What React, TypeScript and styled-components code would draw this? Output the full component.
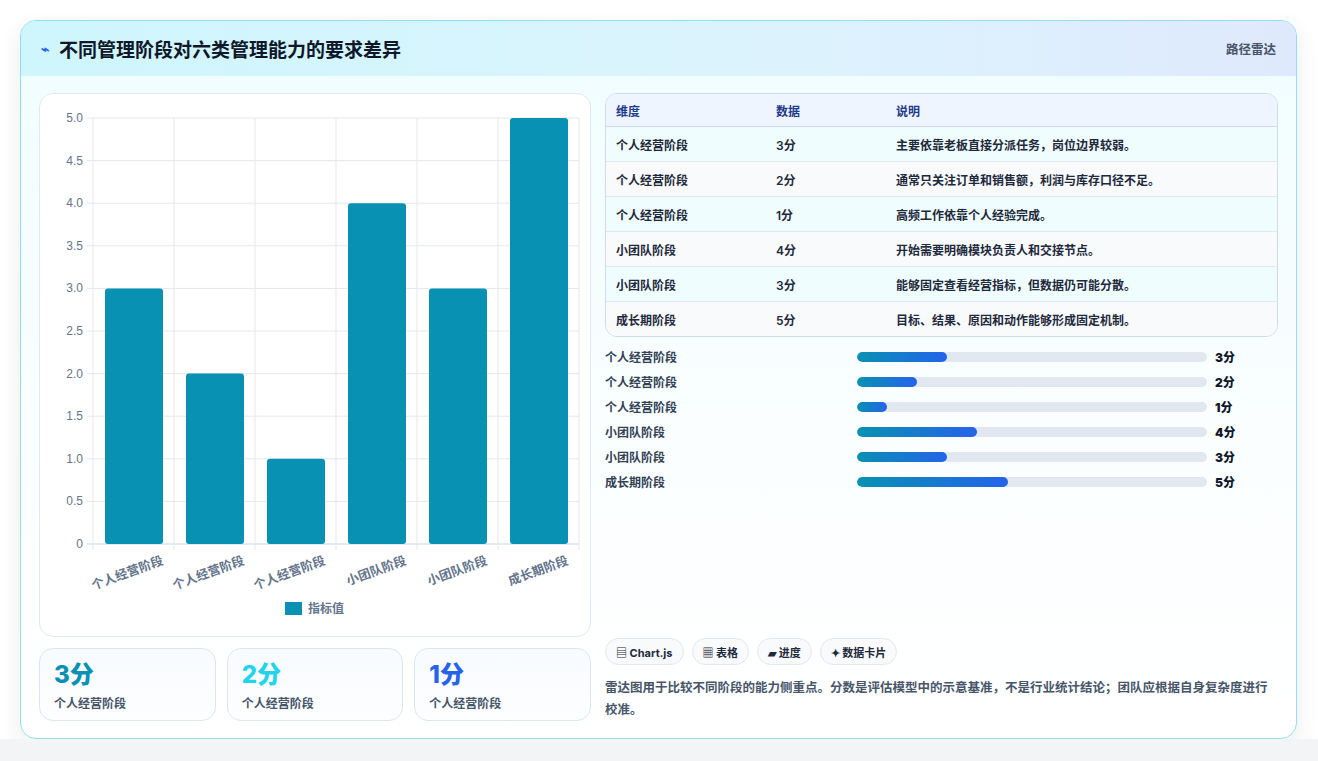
import React from 'react';
import styled, { createGlobalStyle } from 'styled-components';

const Global = createGlobalStyle`
  html, body { margin: 0; background: #fff; }
  body { font-family: "Inter", "Noto Sans CJK SC", sans-serif; color: #0f172a; }
`

const rows = [
  { name: '个人经营阶段', v: 3, note: '主要依靠老板直接分派任务，岗位边界较弱。' },
  { name: '个人经营阶段', v: 2, note: '通常只关注订单和销售额，利润与库存口径不足。' },
  { name: '个人经营阶段', v: 1, note: '高频工作依靠个人经验完成。' },
  { name: '小团队阶段', v: 4, note: '开始需要明确模块负责人和交接节点。' },
  { name: '小团队阶段', v: 3, note: '能够固定查看经营指标，但数据仍可能分散。' },
  { name: '成长期阶段', v: 5, note: '目标、结果、原因和动作能够形成固定机制。' },
]

const Chart = () => {
  const x0 = 53, x1 = 539, y0 = 24, y1 = 450
  const step = (x1 - x0) / 6
  const ys = (v: number) => y1 - (v / 5) * (y1 - y0)
  const ticks = Array.from({ length: 11 }, (_, i) => i * 0.5)
  return (
    <svg width="550" height="542" style={{ display: 'block' }}>
      {ticks.map(t => (
        <g key={t}>
          <line x1={x0 - 6} x2={x1} y1={ys(t)} y2={ys(t)} stroke={t === 0 ? '#cbd5e1' : '#e5e7eb'} />
          <text x={x0 - 10} y={ys(t) + 4} textAnchor="end" fontSize="12" fill="#64748b" fontFamily="Liberation Sans, sans-serif">{t === 0 ? '0' : t.toFixed(1)}</text>
        </g>
      ))}
      {Array.from({ length: 7 }, (_, i) => (
        <line key={i} x1={x0 + i * step} x2={x0 + i * step} y1={y0} y2={y1 + 6} stroke="#e5e7eb" />
      ))}
      {rows.map((r, i) => (
        <g key={i}>
          <rect x={x0 + i * step + 12} y={ys(r.v)} width={step - 23} height={y1 - ys(r.v)} rx="3" fill="#0891b2" />
          <text transform={`translate(${x0 + i * step + step - 10},${y1 + 20}) rotate(-20)`} textAnchor="end" fontSize="12.5" fontWeight="700" fill="#64748b">{r.name}</text>
        </g>
      ))}
      <rect x="245" y="508" width="17" height="13" fill="#0891b2" />
      <text x="268" y="519" fontSize="12" fontWeight="700" fill="#64748b">指标值</text>
    </svg>
  )
}

export default function App() {
  return (
    <Page>
      <Global />
      <Card>
        <Header>
          <Title><Bolt>⌁</Bolt>不同管理阶段对六类管理能力的要求差异</Title>
          <Tag>路径雷达</Tag>
        </Header>
        <Body>
          <Left>
            <ChartCard><Chart /></ChartCard>
            <Stats>
              {[['#0891b2', 3], ['#22d3ee', 2], ['#2563eb', 1]].map(([c, v]) => (
                <Stat key={v}>
                  <StatNum $color={c as string}>{v}分</StatNum>
                  <StatLabel>个人经营阶段</StatLabel>
                </Stat>
              ))}
            </Stats>
          </Left>
          <Right>
            <Table>
              <thead>
                <tr><th>维度</th><th>数据</th><th>说明</th></tr>
              </thead>
              <tbody>
                {rows.map((r, i) => (
                  <tr key={i}><td>{r.name}</td><td>{r.v}分</td><td>{r.note}</td></tr>
                ))}
              </tbody>
            </Table>
            <Bars>
              {rows.map((r, i) => (
                <BarRow key={i}>
                  <span>{r.name}</span>
                  <Track><Fill style={{ width: `${r.v * 8.6}%` }} /></Track>
                  <b>{r.v}分</b>
                </BarRow>
              ))}
            </Bars>
            <Chips>
              <Chip>▤ Chart.js</Chip>
              <Chip>▦ 表格</Chip>
              <Chip>▰ 进度</Chip>
              <Chip>✦ 数据卡片</Chip>
            </Chips>
            <Note>雷达图用于比较不同阶段的能力侧重点。分数是评估模型中的示意基准，不是行业统计结论；团队应根据自身复杂度进行校准。</Note>
          </Right>
        </Body>
      </Card>
      <Strip />
    </Page>
  )
}

const Page = styled.div`
  padding: 20px 20px 0 20px;
`
const Strip = styled.div`
  height: 22px; margin: 0 -20px; background: #f3f4f6;
`
const Card = styled.div`
  width: 1277px; height: 719px; box-sizing: border-box;
  border: 1px solid #8ee0ec; border-radius: 16px; overflow: hidden;
  background: linear-gradient(180deg, #effdff 0%, #fbfeff 60%, #ffffff 100%);
  box-shadow: 0 8px 24px rgba(15, 23, 42, 0.08);
  display: flex; flex-direction: column;
`
const Header = styled.div`
  height: 55px; flex: none; display: flex; align-items: center; justify-content: space-between;
  padding: 0 20px 0 20px;
  background: linear-gradient(90deg, #cef6fc 0%, #dcf3fd 60%, #dfe9fd 100%);
`
const Title = styled.div`
  font-size: 19px; font-weight: 700; color: #0f172a; display: flex; align-items: center;
`
const Bolt = styled.span`
  color: #2563eb; font-size: 14px; margin-right: 10px;
`
const Tag = styled.div`
  font-size: 12.5px; color: #475569; font-weight: 600;
`
const Body = styled.div`
  flex: 1; display: flex; gap: 14px; padding: 17px 18px 18px 18px;
`
const Left = styled.div`
  width: 552px; display: flex; flex-direction: column; gap: 11px;
`
const ChartCard = styled.div`
  height: 544px; box-sizing: border-box; background: #fff;
  border: 1px solid #e2e8f0; border-radius: 14px; overflow: hidden;
`
const Stats = styled.div`
  display: grid; grid-template-columns: repeat(3, 1fr); gap: 11px;
`
const Stat = styled.div`
  height: 73px; box-sizing: border-box; padding: 11px 14px;
  border: 1px solid #dbe6f3; border-radius: 14px;
  background: linear-gradient(180deg, #f8fbff, #fdfeff);
`
const StatNum = styled.div<{ $color: string }>`
  font-size: 24px; font-weight: 800; color: ${p => p.$color}; line-height: 30px;
`
const StatLabel = styled.div`
  font-size: 12px; color: #475569; font-weight: 600; margin-top: 4px;
`
const Right = styled.div`
  flex: 1; display: flex; flex-direction: column;
`
const Table = styled.table`
  width: 100%; border-collapse: separate; border-spacing: 0; font-size: 12px;
  border: 1px solid #cfdbe8; border-radius: 12px; overflow: hidden;
  th { text-align: left; color: #1e3a8a; font-weight: 700; height: 32px; padding: 0 10px;
    background: #eef5fe; border-bottom: 1px solid #cfdbe8; }
  td { height: 34px; padding: 0 10px; color: #1e293b; font-weight: 600; border-top: 1px solid #e2e8f0; }
  tbody tr:first-child td { border-top: none; }
  tbody tr:nth-child(odd) td { background: #f0fdff; }
  tbody tr:nth-child(even) td { background: #f8fafc; }
  th:nth-child(1) { width: 140px; }
  th:nth-child(2) { width: 100px; }
`
const Bars = styled.div`
  margin-top: 7px; display: flex; flex-direction: column;
`
const BarRow = styled.div`
  height: 25px; display: flex; align-items: center; font-size: 12px; font-weight: 600; color: #334155;
  span { width: 252px; }
  b { margin-left: 8px; color: #0f172a; }
`
const Track = styled.div`
  width: 350px; height: 10px; background: #e2e8f0; border-radius: 5px; overflow: hidden;
`
const Fill = styled.div`
  height: 100%; border-radius: 5px; background: linear-gradient(90deg, #0891b2, #2563eb);
`
const Chips = styled.div`
  margin-top: auto; display: flex; gap: 8px;
`
const Chip = styled.div`
  height: 27px; box-sizing: border-box; padding: 0 10px; display: flex; align-items: center;
  border: 1px solid #e2e8f0; border-radius: 14px; background: #f8fafc;
  font-size: 11px; font-weight: 700; color: #1e293b;
`
const Note = styled.div`
  margin-top: 12px; font-size: 12.5px; line-height: 22px; color: #475569; font-weight: 600;
`
